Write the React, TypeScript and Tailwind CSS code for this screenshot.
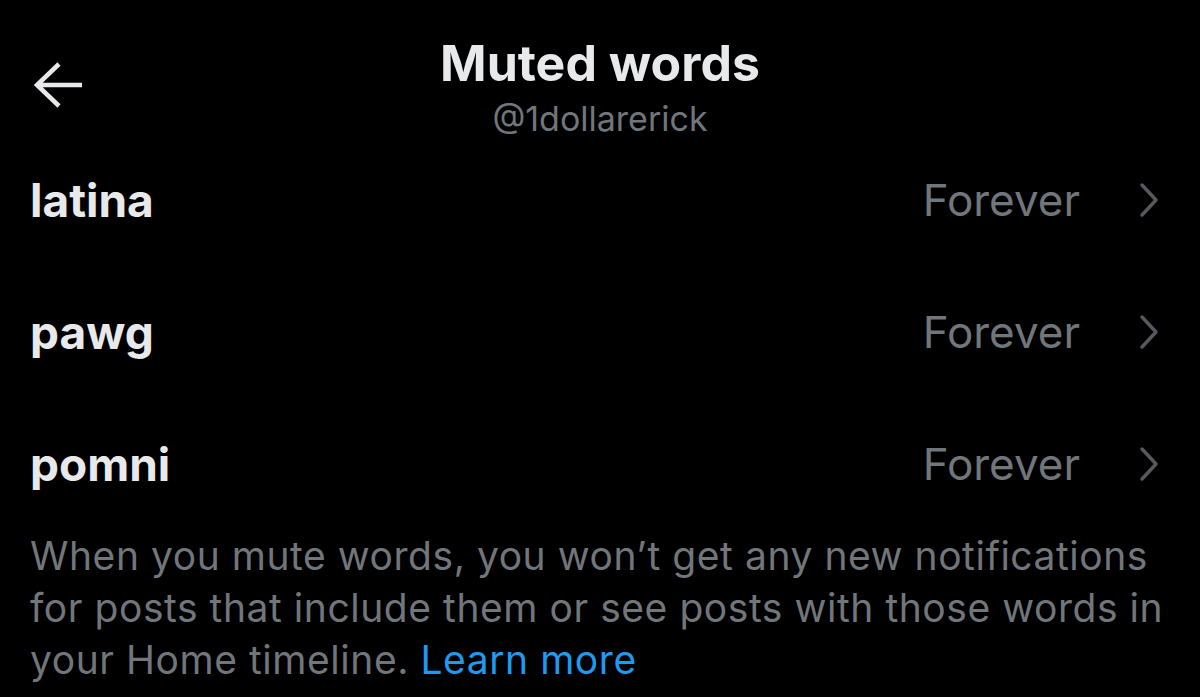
const words = ['latina', 'pawg', 'pomni'];

function BackArrow() {
  return (
    <svg width="54" height="50" viewBox="0 0 54 50" fill="none">
      <path
        d="M5 25 H50 M27 4 L5 25 L27 46"
        stroke="#e7e9ea"
        strokeWidth="4.5"
        strokeLinecap="butt"
        strokeLinejoin="miter"
      />
    </svg>
  );
}

function Chevron() {
  return (
    <svg width="22" height="36" viewBox="0 0 22 36" fill="none">
      <polyline
        points="4,3 18,18 4,33"
        stroke="#55595d"
        strokeWidth="3.5"
        strokeLinecap="round"
        strokeLinejoin="round"
      />
    </svg>
  );
}

export default function App() {
  return (
    <div
      className="w-[1200px] h-[697px] bg-black overflow-hidden text-[#e7e9ea]"
      style={{ fontFamily: 'Inter, "Noto Sans", sans-serif' }}
    >
      {/* Header */}
      <div className="grid grid-cols-[1fr_auto_1fr] h-[134px]">
        <div className="pl-[32px] pt-[60px]">
          <BackArrow />
        </div>
        <div className="flex flex-col items-center pt-[33px]">
          <h1 className="text-[50px] leading-[60px] font-bold">Muted words</h1>
          <div className="text-[34px] leading-[35px] mt-[8px] text-[#71767b]">@1dollarerick</div>
        </div>
        <div />
      </div>

      {/* Muted words list */}
      <div>
        {words.map((w) => (
          <div key={w} className="h-[132px] flex items-center pl-[30px] pr-[40px]">
            <span className="text-[46px] leading-[56px] font-bold flex-1">{w}</span>
            <span className="text-[44px] leading-[56px] text-[#71767b] mr-[58px]">Forever</span>
            <Chevron />
          </div>
        ))}
      </div>

      {/* Footer note */}
      <p className="px-[30px] text-[39px] leading-[52px] tracking-[0.55px] text-[#71767b] whitespace-nowrap">
        When you mute words, you won’t get any new notifications
        <br />
        for posts that include them or see posts with those words in
        <br />
        your Home timeline. <span className="text-[#1d9bf0]">Learn more</span>
      </p>
    </div>
  );
}
